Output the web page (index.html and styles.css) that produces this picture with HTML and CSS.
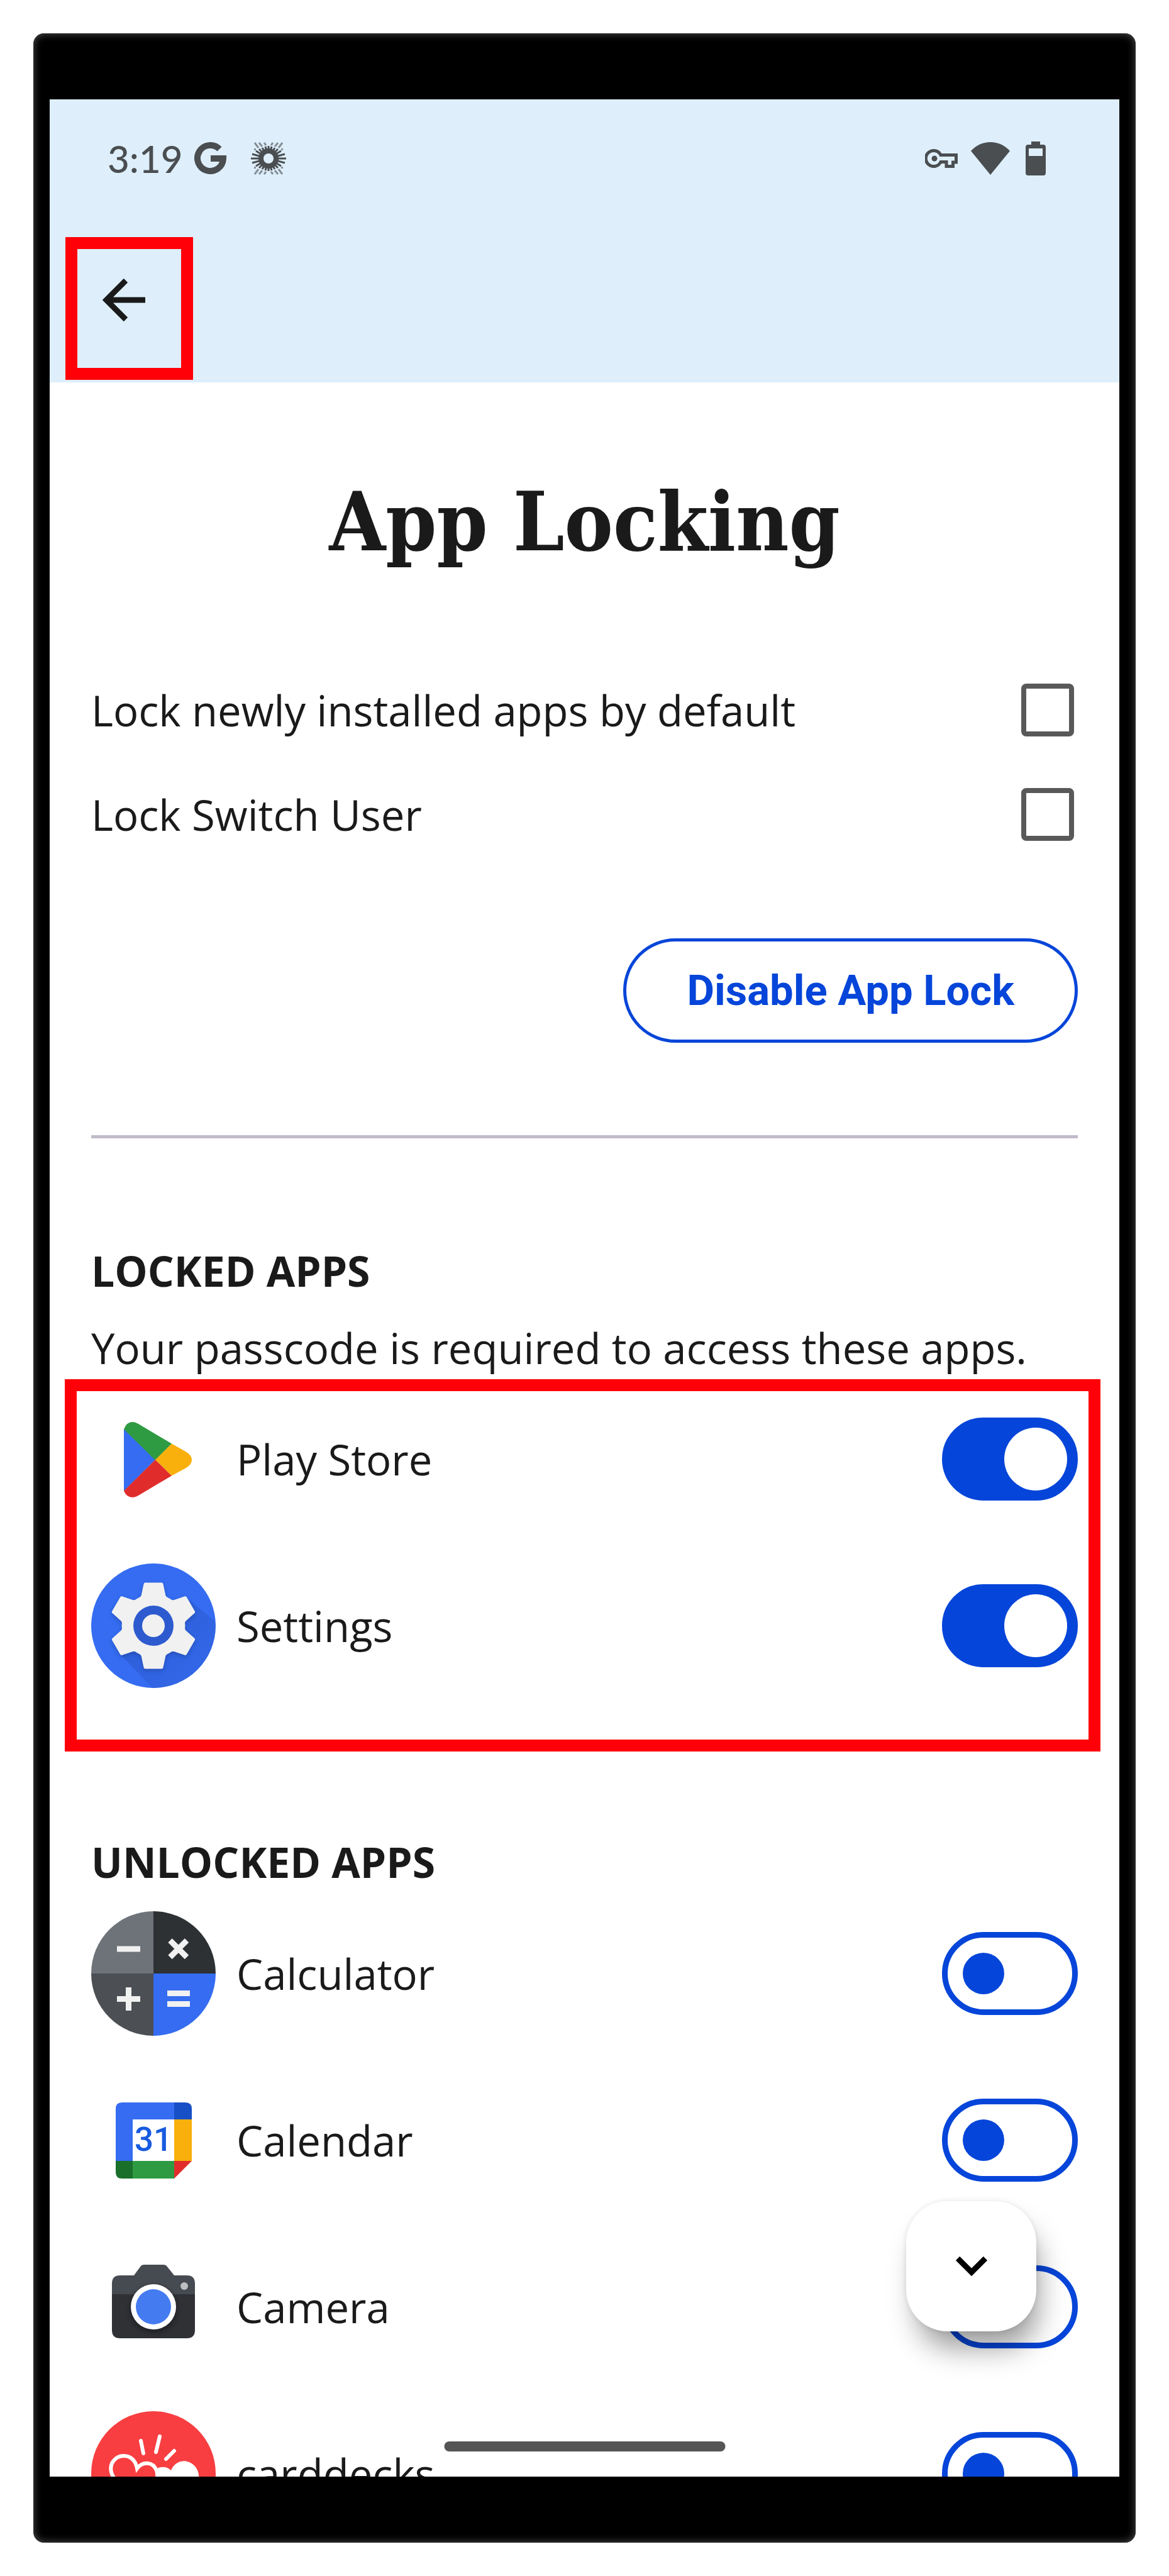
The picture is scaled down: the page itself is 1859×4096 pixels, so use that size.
FILE: index.html
```
<!DOCTYPE html>
<html lang="en">
<head>
    <meta charset="utf-8">
    <title>App Locking</title>
    <link rel="stylesheet" href="styles.css">
</head>
<body>
    <div class="device">
        <div class="screen">
            <header class="top">
                <div class="status_bar">
                    <div class="status_left">
                        <span class="time">3:19</span>
                        <svg class="icon_g" width="52" height="52" viewBox="0 0 52 52">
                            <path d="M40 11A20.500 20.500 0 1 0 46 26H26" fill="none" stroke="#4a4e51" stroke-width="10"/>
                        </svg>
                        <svg class="icon_sun" width="56" height="52" viewBox="0 0 56 52">
                            <defs>
                                <path id="sparks" d="M6 1L12 9M13 1L18 7M21 1L24 5M6 10L7 13"/>
                            </defs>
                            <g fill="none" stroke="#4a4e51">
                                <circle cx="28" cy="26" r="12" stroke-width="8"/>
                                <path d="M0 26H56M2 19L54 33M2 33L54 19M8 14L48 38M8 38L48 14M13 11L43 41M13 41L43 11M18 9L38 43M18 43L38 9M23 7L33 45M23 45L33 7M28 6V46" stroke-width="3"/>
                                <g stroke-width="3" opacity="0.6">
                                    <use href="#sparks"/>
                                    <use href="#sparks" transform="translate(56 0) scale(-1 1)"/>
                                    <use href="#sparks" transform="translate(0 52) scale(1 -1)"/>
                                    <use href="#sparks" transform="translate(56 52) scale(-1 -1)"/>
                                </g>
                            </g>
                            <circle cx="28" cy="26" r="8" fill="#deeffb"/>
                        </svg>
                    </div>
                    <div class="status_right">
                        <svg width="52" height="30" viewBox="0 0 52 30">
                            <path d="M25 9.500A12.500 12.500 0 1 0 25 20.500H34V27.500H44.500V21H49.500V9.500Z" fill="none" stroke="#4a4e51" stroke-width="5"/>
                            <circle cx="15" cy="15" r="4.500" fill="#4a4e51"/>
                        </svg>
                        <svg class="icon_wifi" width="62" height="52" viewBox="0 0 62 52">
                            <path d="M0 14Q13 0 31 0T62 14L31 52Z" fill="#4a4e51"/>
                        </svg>
                        <svg width="32" height="54" viewBox="0 0 32 54">
                            <path fill-rule="evenodd" d="M9 0H23V5H28Q32 5 32 9V50Q32 54 28 54H4Q0 54 0 50V9Q0 5 4 5H9ZM5 11V23H27V11Z" fill="#4a4e51"/>
                        </svg>
                    </div>
                </div>
                <button class="back" aria-label="Back">
                    <svg width="68" height="68" viewBox="0 0 68 68">
                        <path d="M37 3L6 34L37 65M6 34H68" fill="none" stroke="#1a1a1a" stroke-width="9"/>
                    </svg>
                </button>
            </header>

            <main class="content">
                <h1>App Locking</h1>

                <div class="options">
                    <label class="option" for="lock_new">Lock newly installed apps by default
                        <input type="checkbox" id="lock_new" class="checkbox">
                    </label>
                    <label class="option" for="lock_switch">Lock Switch User
                        <input type="checkbox" id="lock_switch" class="checkbox">
                    </label>
                </div>

                <button class="disable">Disable App Lock</button>

                <hr>

                <section class="locked">
                    <h2>LOCKED APPS</h2>
                    <p>Your passcode is required to access these apps.</p>
                    <div class="app_list highlight">
                        <label class="app" for="play_store">
                            <svg class="app_icon" viewBox="0 0 198 198">
                                <path d="M52 51V150L102 100Z" fill="#356cf1"/>
                                <path d="M52 51.500Q56 40 66 40Q70 40 75 43L128 74.500L102 101Z" fill="#2e9b42"/>
                                <path d="M52 149.500Q56 160 66 160Q70 160 75 157L128 125.500L102 100Z" fill="#e02d2b"/>
                                <path d="M128 74.500L151 87.500Q160 93 160 100Q160 108 151 113L128 125.500L102 100Z" fill="#f9b00c"/>
                            </svg>
                            <span class="app_name">Play Store</span>
                            <input type="checkbox" id="play_store" class="toggle" checked>
                        </label>
                        <label class="app" for="settings">
                            <svg class="app_icon" viewBox="0 0 198 198">
                                <defs>
                                    <linearGradient id="gear_shade" x1="0" y1="0" x2="1" y2="1">
                                        <stop offset="0" stop-color="#1c3f9e" stop-opacity="0.4"/>
                                        <stop offset="1" stop-color="#1c3f9e" stop-opacity="0"/>
                                    </linearGradient>
                                    <filter id="soft" x="-20%" y="-20%" width="140%" height="140%">
                                        <feGaussianBlur stdDeviation="3"/>
                                    </filter>
                                    <clipPath id="disc"><circle cx="99" cy="99" r="99"/></clipPath>
                                    <g id="gear">
                                        <circle cx="99" cy="99" r="50"/>
                                        <path id="tooth" d="M86 33H112L116 52L124 64H74L82 52Z" stroke-width="5" stroke-linejoin="round"/>
                                        <use href="#tooth" transform="rotate(60 99 99)"/>
                                        <use href="#tooth" transform="rotate(120 99 99)"/>
                                        <use href="#tooth" transform="rotate(180 99 99)"/>
                                        <use href="#tooth" transform="rotate(240 99 99)"/>
                                        <use href="#tooth" transform="rotate(300 99 99)"/>
                                    </g>
                                </defs>
                                <circle cx="99" cy="99" r="99" fill="#356cf1"/>
                                <path d="M154 56L220 112V220H118L46 144Z" fill="url(#gear_shade)" clip-path="url(#disc)"/>
                                <use href="#gear" y="3" fill="#1d3c8c" stroke="#1d3c8c" opacity="0.45" filter="url(#soft)"/>
                                <use href="#gear" fill="#f1f1f1" stroke="#f1f1f1"/>
                                <circle cx="99" cy="99" r="32" fill="#2d5bcf"/>
                                <circle cx="99" cy="99" r="18" fill="#f1f1f1"/>
                            </svg>
                            <span class="app_name">Settings</span>
                            <input type="checkbox" id="settings" class="toggle" checked>
                        </label>
                    </div>
                </section>

                <section class="unlocked">
                    <h2>UNLOCKED APPS</h2>
                    <div class="app_list">
                        <label class="app" for="calculator">
                            <svg class="app_icon" viewBox="0 0 198 198">
                                <path d="M99 99H0A99 99 0 0 1 99 0Z" fill="#6e737a"/>
                                <path d="M99 99V0A99 99 0 0 1 198 99Z" fill="#2d3134"/>
                                <path d="M99 99V198A99 99 0 0 1 0 99Z" fill="#4c4f54"/>
                                <path d="M99 99H198A99 99 0 0 1 99 198Z" fill="#356cf1"/>
                                <path d="M41 60H78M41 139.500H78M59.500 121V158M121 130.500H157M121 147.500H157M125.500 46.500L152 73M152 46.500L125.500 73" fill="none" stroke="#f1f1f1" stroke-width="9"/>
                            </svg>
                            <span class="app_name">Calculator</span>
                            <input type="checkbox" id="calculator" class="toggle">
                        </label>
                        <label class="app" for="calendar">
                            <svg class="app_icon" viewBox="0 0 198 198">
                                <path d="M39 132V49Q39 39 49 39H132V66H66V132Z" fill="#356cf1"/>
                                <path d="M132 39H150Q160 39 160 49V66H132Z" fill="#174fc6"/>
                                <path d="M132 66H160V132H132Z" fill="#f9b00c"/>
                                <path d="M132 132H160L132 160Z" fill="#e02d2b"/>
                                <path d="M66 132H132V160H66Z" fill="#2e9b42"/>
                                <path d="M39 132H66V160H49Q39 160 39 150Z" fill="#1a6f2a"/>
                                <text class="calendar_day" x="99" y="116" text-anchor="middle">31</text>
                            </svg>
                            <span class="app_name">Calendar</span>
                            <input type="checkbox" id="calendar" class="toggle">
                        </label>
                        <label class="app" for="camera">
                            <svg class="app_icon" viewBox="0 0 198 198">
                                <defs>
                                    <clipPath id="camera_body">
                                        <path d="M46 49H68L79 34Q81 32 84 32H115Q118 32 120 34L132 49H152Q165 49 165 62V136Q165 149 152 149H46Q33 149 33 136V62Q33 49 46 49Z"/>
                                    </clipPath>
                                </defs>
                                <g clip-path="url(#camera_body)">
                                    <path d="M33 32H165V79H33Z" fill="#464b51"/>
                                    <path d="M33 79H165V149H33Z" fill="#2f3135"/>
                                    <circle cx="99" cy="103" r="38" fill="#17181a" opacity="0.5" filter="url(#soft)"/>
                                </g>
                                <circle cx="99" cy="99" r="36" fill="#fff"/>
                                <circle cx="99" cy="99" r="28" fill="#457bf0"/>
                                <circle cx="148" cy="66" r="6" fill="#bdbec0"/>
                            </svg>
                            <span class="app_name">Camera</span>
                            <input type="checkbox" id="camera" class="toggle">
                        </label>
                        <label class="app" for="carddecks">
                            <svg class="app_icon" viewBox="0 0 198 198">
                                <circle cx="99" cy="99" r="99" fill="#f83e41"/>
                                <path d="M79 47L83 67M109 40L103 65M132 63L119 76" fill="none" stroke="#fff" stroke-width="6" stroke-linecap="round"/>
                                <path d="M95 146Q44 124 33 100C27 84 38 71 52 71C64 71 71 80 73 91C82 79 98 80 104 94C109 112 98 130 95 146Z" fill="none" stroke="#fff" stroke-width="6"/>
                                <path d="M106 90Q119 86 127 94C133 80 146 77 156 81C170 87 175 103 168 116Q152 140 118 146L106 110Z" fill="#fff"/>
                            </svg>
                            <span class="app_name">carddecks</span>
                            <input type="checkbox" id="carddecks" class="toggle">
                        </label>
                    </div>
                </section>
            </main>

            <button class="scroll_down" aria-label="Scroll down">
                <svg width="50" height="32" viewBox="0 0 50 32">
                    <path d="M3 3L25 25L47 3" fill="none" stroke="#000" stroke-width="9"/>
                </svg>
            </button>
            <div class="home_bar"></div>
        </div>
    </div>
</body>
</html>
```
FILE: styles.css
```
* {
    box-sizing: border-box;
}

body {
    font-family: "Open Sans", "Noto Sans", sans-serif;
    font-size: 67px;
    line-height: 90px;
    color: #1a1a1a;
    background-color: #fff;
    height: 100vh;
    margin: 0;
    padding: 53px;
}

/* phone frame */
.device {
    height: 100%;
    padding: 105px 26px;
    background-color: #000;
    border-radius: 17px;
    box-shadow: inset 0 0 14px #555;
}

.screen {
    position: relative;
    height: 100%;
    overflow: hidden;
    background-color: #fff;
}

.top {
    height: 450px;
    padding: 58px 0 0 25px;
    background-color: #deeffb;
}

.status_bar {
    display: flex;
    justify-content: space-between;
    align-items: center;
    height: 72px;
    padding: 0 117px 0 67px;
}

.status_left, .status_right {
    display: flex;
    align-items: center;
}

.time {
    font-family: Lato, sans-serif;
    font-size: 60px;
    font-weight: 500;
    color: #4a4e51;
}

.icon_g {
    margin: 0 38px 0 18px;
}

.icon_wifi {
    margin: 0 25px 0 21px;
}

.back {
    display: flex;
    justify-content: center;
    align-items: center;
    width: 203px;
    height: 227px;
    margin-top: 89px;
    padding: 0 17px 27px 0;
    border: 19px solid #ff0008;
    background: none;
}

.content {
    padding: 0 66px;
}

h1 {
    font-family: "DejaVu Serif Condensed", "DejaVu Serif", serif;
    font-size: 129px;
    line-height: 180px;
    text-align: center;
    margin: 0;
    padding-top: 132px;
}

.options {
    display: flex;
    flex-direction: column;
    gap: 76px;
    margin-top: 164px;
}

.option {
    display: flex;
    justify-content: space-between;
    align-items: center;
}

.checkbox {
    appearance: none;
    width: 84px;
    height: 84px;
    margin: 0 6px 0 0;
    border: 8px solid #595959;
    border-radius: 8px;
}

.disable {
    display: block;
    height: 166px;
    margin: 152px 0 0 auto;
    padding: 0 96px;
    border: 5px solid #0545d9;
    border-radius: 83px;
    background: none;
    color: #0545d9;
    font-family: Roboto, sans-serif;
    font-size: 67px;
    font-weight: 700;
}

hr {
    height: 5px;
    margin: 147px 0 0;
    border: none;
    background-color: #c2bbca;
}

h2 {
    font-size: 66px;
    line-height: 90px;
    margin: 0;
}

p {
    margin: 0;
}

.locked {
    margin-top: 165px;
}

.locked p {
    margin-top: 33px;
}

.app_list {
    display: flex;
    flex-direction: column;
    gap: 67px;
}

/* red marker round the locked apps */
.highlight {
    margin: 5px -36px 0 -42px;
    padding: 9px 17px 82px 23px;
    border: 19px solid #ff0008;
}

.unlocked {
    margin-top: 130px;
}

.unlocked .app_list {
    margin-top: 34px;
}

.app {
    display: flex;
    align-items: center;
    gap: 33px;
}

.app_icon {
    width: 198px;
    height: 198px;
    flex-shrink: 0;
}

.app_name {
    flex: 1;
}

.calendar_day {
    font-family: Roboto, sans-serif;
    font-size: 53px;
    font-weight: 500;
    fill: #185be0;
}

.toggle {
    appearance: none;
    display: flex;
    align-items: center;
    width: 216px;
    height: 132px;
    margin: 0;
    padding-left: 24px;
    border: 9px solid #0545d9;
    border-radius: 66px;
    background-color: #fff;
}

.toggle::before {
    content: "";
    width: 66px;
    height: 66px;
    border-radius: 50%;
    background-color: #0545d9;
}

.toggle:checked {
    padding-left: 90px;
    background-color: #0545d9;
}

.toggle:checked::before {
    width: 100px;
    height: 100px;
    background-color: #fff;
}

.scroll_down {
    position: absolute;
    right: 132px;
    bottom: 231px;
    display: flex;
    justify-content: center;
    align-items: center;
    width: 207px;
    height: 207px;
    border: none;
    border-radius: 66px;
    background-color: #fff;
    box-shadow: 0 0 8px rgba(0, 0, 0, 0.1), 10px 34px 46px -8px rgba(0, 0, 0, 0.4);
}

.home_bar {
    position: absolute;
    left: 50%;
    bottom: 40px;
    width: 447px;
    height: 16px;
    border-radius: 8px;
    background-color: #555;
    transform: translateX(-50%);
}
```
